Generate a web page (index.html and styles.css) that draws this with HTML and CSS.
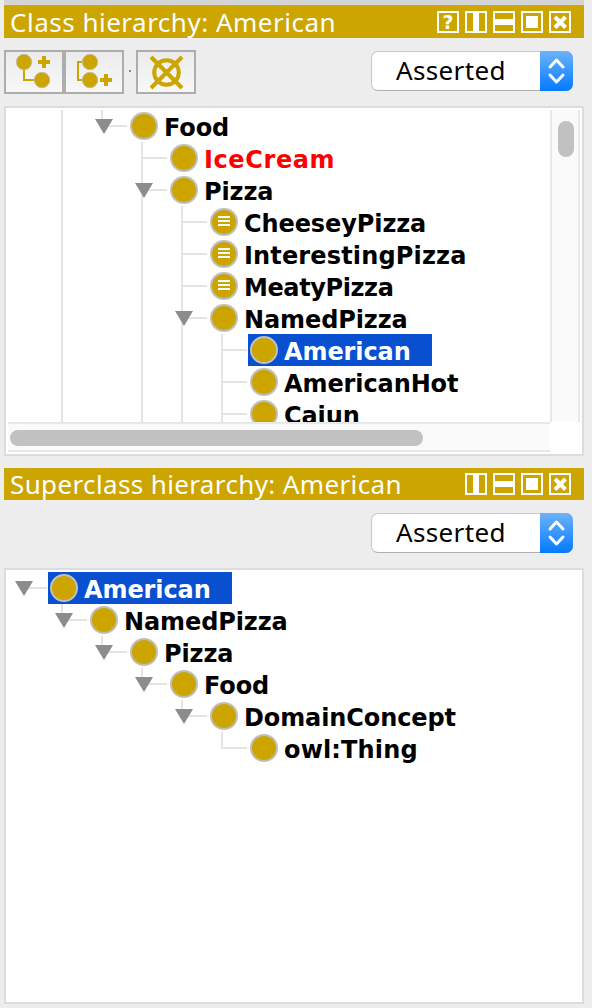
FILE: index.html
```
<!DOCTYPE html>
<html lang="en">
<head>
<meta charset="utf-8">
<title>Class hierarchy</title>
<link rel="stylesheet" href="styles.css">
</head>
<body>
<div class="strip"></div>
<section class="pane">
  <header class="bar">
    <h2 class="title title-class">Class hierarchy: American</h2>
    <svg class="ic" viewBox="0 0 22 22"><path class="box" d="M1 1h20v20H1z"/><text class="q" x="11" y="18" text-anchor="middle">?</text></svg>
    <svg class="ic" viewBox="0 0 22 22"><path class="box" d="M1 1h20v20H1z"/><path class="solid" d="M8 2h6v18H8z"/></svg>
    <svg class="ic" viewBox="0 0 22 22"><path class="box" d="M1 1h20v20H1z"/><path class="solid" d="M2 8h18v6H2z"/></svg>
    <svg class="ic" viewBox="0 0 22 22"><path class="box" d="M1 1h20v20H1z"/><path class="solid" d="M5 5h12v12H5z"/></svg>
    <svg class="ic" viewBox="0 0 22 22"><path class="box" d="M1 1h20v20H1z"/><path class="x" d="M6 6l10.500 10.500M16.500 6L6 16.500"/></svg>
  </header>
  <div class="tools">
    <button class="tool" aria-label="Add subclass"><svg viewBox="0 0 56 40"><path class="ln" d="M18 10v18h18"/><circle class="halo" cx="18" cy="10" r="7.700"/><circle class="halo" cx="36" cy="28" r="7.700"/><path class="plus" d="M32 10h12M38 4v12"/></svg></button>
    <button class="tool" aria-label="Add sibling class"><svg viewBox="0 0 56 40"><path class="ln" d="M24 10H12v18h12"/><circle class="halo" cx="24" cy="10" r="7.700"/><circle class="halo" cx="24" cy="28" r="7.700"/><path class="plus" d="M34 28h12M40 22v12"/></svg></button>
    <i class="sep"></i>
    <button class="tool" aria-label="Delete class"><svg viewBox="0 0 56 40"><circle class="ring" cx="28.500" cy="20.500" r="12.300"/><path class="cross" d="M13 5l31 31M44 5L13 36"/></svg></button>
    <div class="select"><span class="value">Asserted</span><span class="step"><svg viewBox="0 0 33 40"><path d="M10 16l6.500-7 6.500 7M10 24l6.500 7 6.500-7"/></svg></span></div>
  </div>
  <div class="frame frame-class">
    <div class="view">
      <div class="row"><i></i><i class="v"></i><i class="l a"></i><span class="node"><b></b>Food</span></div>
      <div class="row"><i></i><i class="v"></i><i></i><i class="v h"></i><span class="node bad wider"><b></b>IceCream</span></div>
      <div class="row"><i></i><i class="v"></i><i></i><i class="v h a"></i><span class="node"><b></b>Pizza</span></div>
      <div class="row"><i></i><i class="v"></i><i></i><i class="v"></i><i class="v h"></i><span class="node"><b class="def"></b>CheeseyPizza</span></div>
      <div class="row"><i></i><i class="v"></i><i></i><i class="v"></i><i class="v h"></i><span class="node wide"><b class="def"></b>InterestingPizza</span></div>
      <div class="row"><i></i><i class="v"></i><i></i><i class="v"></i><i class="v h"></i><span class="node tight"><b class="def"></b>MeatyPizza</span></div>
      <div class="row"><i></i><i class="v"></i><i></i><i class="v"></i><i class="v h a"></i><span class="node"><b></b>NamedPizza</span></div>
      <div class="row"><i></i><i class="v"></i><i></i><i class="v"></i><i class="v"></i><i class="v h"></i><span class="node sel"><b></b>American</span></div>
      <div class="row"><i></i><i class="v"></i><i></i><i class="v"></i><i class="v"></i><i class="v h"></i><span class="node"><b></b>AmericanHot</span></div>
      <div class="row"><i></i><i class="v"></i><i></i><i class="v"></i><i class="v"></i><i class="v h"></i><span class="node"><b></b>Cajun</span></div>
    </div>
    <div class="vscroll"><div class="vthumb"></div></div>
    <div class="hscroll"><div class="hthumb"></div></div>
  </div>
</section>
<section class="pane pane-super">
  <header class="bar">
    <h2 class="title title-super">Superclass hierarchy: American</h2>
    <svg class="ic" viewBox="0 0 22 22"><path class="box" d="M1 1h20v20H1z"/><path class="solid" d="M8 2h6v18H8z"/></svg>
    <svg class="ic" viewBox="0 0 22 22"><path class="box" d="M1 1h20v20H1z"/><path class="solid" d="M2 8h18v6H2z"/></svg>
    <svg class="ic" viewBox="0 0 22 22"><path class="box" d="M1 1h20v20H1z"/><path class="solid" d="M5 5h12v12H5z"/></svg>
    <svg class="ic" viewBox="0 0 22 22"><path class="box" d="M1 1h20v20H1z"/><path class="x" d="M6 6l10.500 10.500M16.500 6L6 16.500"/></svg>
  </header>
  <div class="tools">
    <div class="select"><span class="value">Asserted</span><span class="step"><svg viewBox="0 0 33 40"><path d="M10 16l6.500-7 6.500 7M10 24l6.500 7 6.500-7"/></svg></span></div>
  </div>
  <div class="frame frame-super">
    <div class="row"><i class="h a"></i><span class="node sel"><b></b>American</span></div>
    <div class="row"><i></i><i class="l a"></i><span class="node"><b></b>NamedPizza</span></div>
    <div class="row"><i></i><i></i><i class="l a"></i><span class="node"><b></b>Pizza</span></div>
    <div class="row"><i></i><i></i><i></i><i class="l a"></i><span class="node"><b></b>Food</span></div>
    <div class="row"><i></i><i></i><i></i><i></i><i class="l a"></i><span class="node"><b></b>DomainConcept</span></div>
    <div class="row"><i></i><i></i><i></i><i></i><i></i><i class="l"></i><span class="node wide"><b></b>owl:Thing</span></div>
  </div>
</section>
</body>
</html>
```
FILE: styles.css
```
* { box-sizing: border-box; }
body {
  margin: 0;
  height: 1008px;
  padding: 0 8px 0 4px;
  background: #ededed;
  overflow: hidden;
}
.strip { height: 6px; background: #d4d4d4; border-bottom: 1px solid #a0a0a0; }
.pane-super { margin-top: 12px; }

.bar {
  display: flex;
  align-items: center;
  gap: 6px;
  height: 32px;
  padding: 0 13px 0 6px;
  background: #cca500;
}
.title {
  flex: 1;
  margin: 0;
  font: 400 26px/32px "Noto Sans", sans-serif;
  color: #fff;
  white-space: nowrap;
}
.title-class { letter-spacing: 0.5px; }
.title-super { letter-spacing: 0.37px; }
.ic { width: 22px; height: 22px; }
.box { fill: none; stroke: #fff; stroke-width: 2; }
.solid { fill: #fff; }
.x { fill: none; stroke: #fff; stroke-width: 4; }
.q { font: 700 19px "DejaVu Sans", sans-serif; fill: #fff; }

.tools { display: flex; align-items: center; height: 68px; padding-right: 11px; }
.tool {
  width: 60px;
  height: 44px;
  padding: 0;
  border: 2px solid #adadad;
  background: linear-gradient(#ebebeb, #f8f8f8);
}
.tool svg { display: block; width: 56px; height: 40px; }
.ln { fill: none; stroke: #cca500; stroke-width: 2; }
.halo { fill: #cca500; stroke: #c6bd9b; stroke-width: 1; }
.plus { stroke: #cca500; stroke-width: 4; }
.ring { fill: none; stroke: #cca500; stroke-width: 4; }
.cross { stroke: #cca500; stroke-width: 4; }
.sep { width: 2px; height: 2px; margin: 0 5px; background: #888; position: relative; top: -1px; }

.select {
  display: flex;
  width: 202px;
  height: 40px;
  margin: -2px 0 0 auto;
  border: 1px solid #c8c8c8;
  border-bottom-color: #b0b0b0;
  border-radius: 7px;
  background: #fff;
}
.value {
  flex: 1;
  padding-left: 24px;
  font: 400 26px/36px "Noto Sans", sans-serif;
  letter-spacing: 0.35px;
  color: #000;
}
.step {
  width: 33px;
  height: 40px;
  margin: -1px -1px 0 0;
  border-radius: 0 7px 7px 0;
  background: linear-gradient(#6bb3fa, #057aff);
}
.step svg { display: block; width: 33px; height: 40px; }
.step path { fill: none; stroke: #fff; stroke-width: 3; stroke-linecap: round; stroke-linejoin: round; }

.frame { border: 2px solid #dcdcdc; background: #fff; padding: 2px; }
.frame-class {
  display: grid;
  grid-template: 312px 30px / 542px 30px;
  height: 350px;
}
.frame-super { height: 436px; }
.view { overflow: hidden; }

.row { display: flex; height: 32px; }
.row i { position: relative; flex: none; width: 40px; height: 32px; }
.v::before, .l::before {
  content: "";
  position: absolute;
  left: 13px;
  top: 0;
  width: 2px;
  height: 32px;
  background: #e4e4e4;
}
.l::before { height: 17px; }
.h, .l {
  background: linear-gradient(#e4e4e4, #e4e4e4) 13px 15px / 26px 2px no-repeat;
}
.a::after {
  content: "";
  position: absolute;
  left: 7px;
  top: 9px;
  width: 18px;
  height: 15px;
  background: #8c8c8c;
  clip-path: polygon(0 0, 100% 0, 50% 100%);
}
.node {
  display: flex;
  height: 32px;
  padding: 0 21px 0 2px;
  font: 700 24px/36px "DejaVu Sans", sans-serif;
  letter-spacing: -0.1px;
  color: #000;
  white-space: nowrap;
}
.node b {
  flex: none;
  width: 28px;
  height: 28px;
  margin: 2px 6px 0 0;
  border: 2px solid #bfbfbf;
  border-radius: 50%;
  background: #cca500;
}
.node .def {
  background: linear-gradient(#fff 2px, transparent 2px 4px, #fff 4px 6px, transparent 6px 8px, #fff 8px) 6px 6px / 12px 10px no-repeat #cca500;
}
.wide { letter-spacing: 0.15px; }
.wider { letter-spacing: 0.6px; }
.tight { letter-spacing: -0.4px; }
.bad { color: #f00; }
.sel { width: 184px; color: #fff; background: #0850d0; }

.vscroll {
  padding: 11px 0 0 6px;
  border: solid #e8e8e8;
  border-width: 0 2px;
  background: #fafafa;
}
.vthumb { width: 16px; height: 36px; border-radius: 8px; background: #c1c1c1; }
.hscroll {
  padding: 6px 0 0 2px;
  border: solid #e8e8e8;
  border-width: 2px 0;
  background: #fafafa;
}
.hthumb { width: 413px; height: 16px; border-radius: 8px; background: #c1c1c1; }
```
